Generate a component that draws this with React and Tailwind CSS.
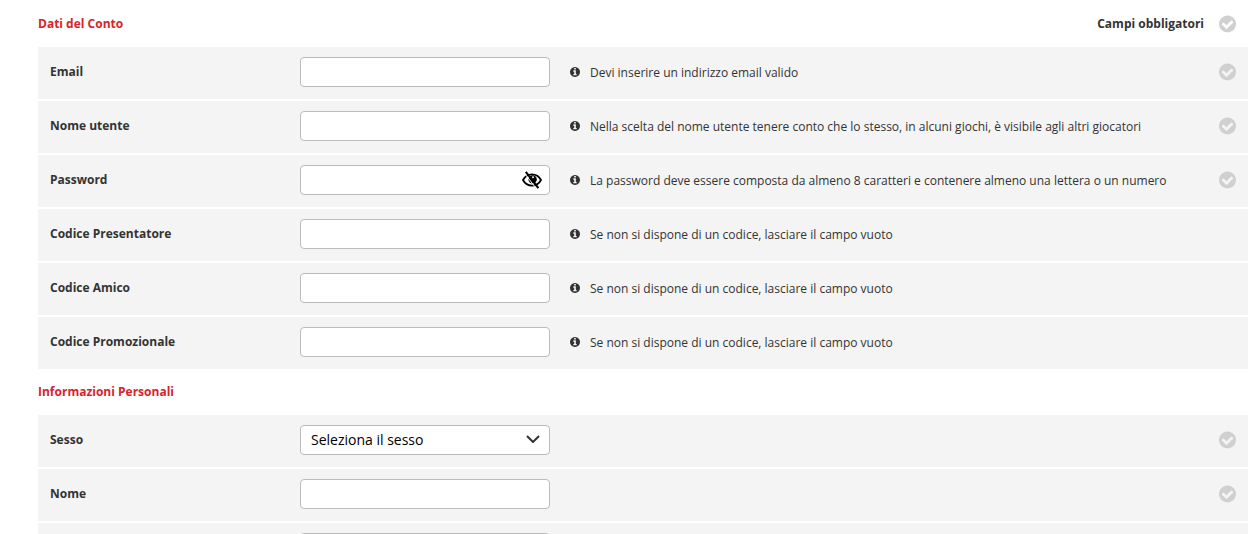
import { useState } from "react";

const CODE_HINT = "Se non si dispone di un codice, lasciare il campo vuoto";

const ACCOUNT_FIELDS = [
  { id: "email", label: "Email", type: "email", hint: "Devi inserire un indirizzo email valido", required: true },
  {
    id: "username",
    label: "Nome utente",
    hint: "Nella scelta del nome utente tenere conto che lo stesso, in alcuni giochi, è visibile agli altri giocatori",
    required: true,
  },
  {
    id: "password",
    label: "Password",
    type: "password",
    hint: "La password deve essere composta da almeno 8 caratteri e contenere almeno una lettera o un numero",
    required: true,
  },
  { id: "presenter", label: "Codice Presentatore", hint: CODE_HINT },
  { id: "friend", label: "Codice Amico", hint: CODE_HINT },
  { id: "promo", label: "Codice Promozionale", hint: CODE_HINT },
];

const PERSONAL_FIELDS = [
  { id: "sex", label: "Sesso", type: "select", required: true },
  { id: "firstName", label: "Nome", required: true },
  { id: "lastName", label: "Cognome", required: true },
];

function CheckCircle() {
  return (
    <svg viewBox="128 128 1536 1536" className="h-[18px] w-[17px] shrink-0 fill-[#d0d0d0]" aria-hidden="true">
      <path d="M1412 734q0-28-18-46l-91-90q-19-19-45-19t-45 19l-408 407-226-226q-19-19-45-19t-45 19l-91 90q-18 18-18 46 0 27 18 45l362 362q19 19 45 19 27 0 46-19l543-543q18-18 18-45zm252 162q0 209-103 385.5t-279.5 279.5-385.5 103-385.5-103-279.5-279.5-103-385.5 103-385.5 279.5-279.5 385.5-103 385.5 103 279.5 279.5 103 385.5z" />
    </svg>
  );
}

function InfoCircle() {
  return (
    <svg viewBox="128 128 1536 1536" className="size-2.5 shrink-0 fill-[#333]" aria-hidden="true">
      <path d="M1152 1376v-160q0-14-9-23t-23-9h-96v-512q0-14-9-23t-23-9h-320q-14 0-23 9t-9 23v160q0 14 9 23t23 9h96v320h-96q-14 0-23 9t-9 23v160q0 14 9 23t23 9h448q14 0 23-9t9-23zm-128-896v-160q0-14-9-23t-23-9h-192q-14 0-23 9t-9 23v160q0 14 9 23t23 9h192q14 0 23-9t9-23zm640 416q0 209-103 385.5t-279.5 279.5-385.5 103-385.5-103-279.5-279.5-103-385.5 103-385.5 279.5-279.5 385.5-103 385.5 103 279.5 279.5 103 385.5z" />
    </svg>
  );
}

function EyeOff() {
  return (
    <svg viewBox="0 0 20 18" className="h-[18px] w-5" fill="none" aria-hidden="true">
      <path d="M1 9C3 5.2 6.2 3.4 10 3.4S17 5.2 19 9C17 12.8 13.8 14.6 10 14.6S3 12.8 1 9Z" stroke="#000" strokeWidth="1.8" />
      <circle cx="10.6" cy="8.4" r="4.2" fill="#000" />
      <circle cx="11" cy="6.2" r="1" fill="#fff" />
      <path d="M2.6 2.4L14 17.2" stroke="#fff" strokeWidth="1" />
      <path d="M3.8 0.8L16.4 17.2" stroke="#000" strokeWidth="2" />
    </svg>
  );
}

const CONTROL = "h-[30px] w-full rounded border border-[#bbb] bg-white px-2.5 text-sm text-black outline-none focus:border-[#777]";

function Control({ field }) {
  const [visible, setVisible] = useState(false);

  if (field.type === "select") {
    return (
      <div className="relative">
        <select id={field.id} className={`${CONTROL} appearance-none`} defaultValue="">
          <option value="">Seleziona il sesso</option>
          <option value="m">Maschio</option>
          <option value="f">Femmina</option>
        </select>
        <svg viewBox="0 0 14 8" className="pointer-events-none absolute top-2.5 right-2.5 h-2 w-3.5" fill="none" aria-hidden="true">
          <path d="M1 1L7 7L13 1" stroke="#333" strokeWidth="2" />
        </svg>
      </div>
    );
  }

  if (field.type === "password") {
    return (
      <div className="relative">
        <input id={field.id} type={visible ? "text" : "password"} className={`${CONTROL} pr-9`} />
        <button
          type="button"
          aria-label="Mostra password"
          className="absolute inset-y-0 right-2 flex items-center"
          onClick={() => setVisible(!visible)}
        >
          <EyeOff />
        </button>
      </div>
    );
  }

  return <input id={field.id} type={field.type || "text"} className={CONTROL} />;
}

function FieldRow({ field }) {
  return (
    <div className="flex min-h-13 items-start bg-[#f4f4f4] px-3 py-2.5">
      <label htmlFor={field.id} className="mt-1.5 w-[250px] shrink-0 font-bold leading-[18px]">
        {field.label}
      </label>
      <div className="w-[250px] shrink-0">
        <Control field={field} />
      </div>
      <div className="flex min-w-0 flex-1 items-start gap-2.5 px-5">
        {field.hint && (
          <>
            <span className="flex h-[30px] items-center">
              <InfoCircle />
            </span>
            <p className="leading-8">{field.hint}</p>
          </>
        )}
      </div>
      {field.required && (
        <div className="mt-1.5">
          <CheckCircle />
        </div>
      )}
    </div>
  );
}

function Section({ title, fields, aside }) {
  return (
    <section>
      <div className="flex h-[46px] items-center justify-between pr-3">
        <h2 className="font-bold text-[#d8232a]">{title}</h2>
        {aside}
      </div>
      <div className="flex flex-col gap-0.5">
        {fields.map((field) => (
          <FieldRow key={field.id} field={field} />
        ))}
      </div>
    </section>
  );
}

export default function App() {
  return (
    <main className="h-screen overflow-hidden bg-white pt-px pr-[9px] pl-[38px] font-['Open_Sans',sans-serif] text-xs text-[#333]">
      <form>
        <Section
          title="Dati del Conto"
          fields={ACCOUNT_FIELDS}
          aside={
            <div className="flex items-center gap-[15px] font-bold">
              <span>Campi obbligatori</span>
              <CheckCircle />
            </div>
          }
        />
        <Section title="Informazioni Personali" fields={PERSONAL_FIELDS} />
      </form>
    </main>
  );
}
